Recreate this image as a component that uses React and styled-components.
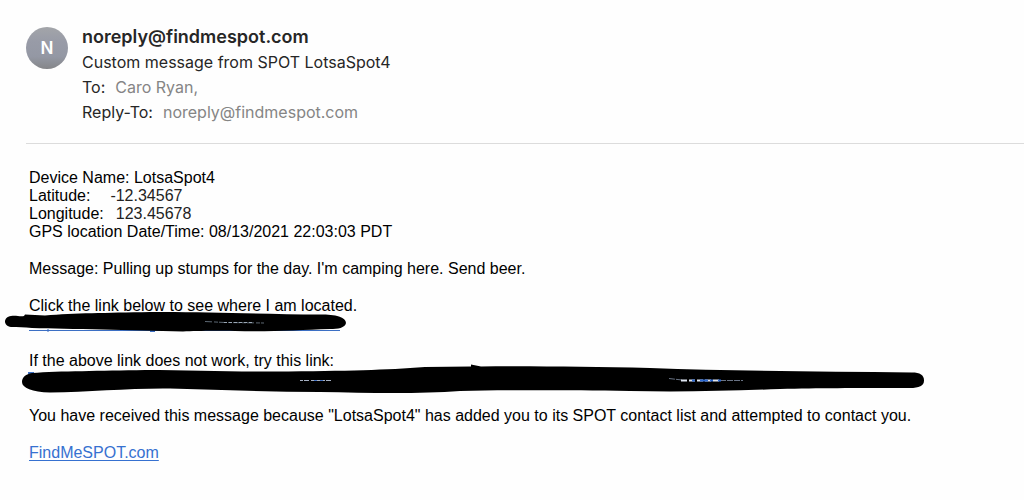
import styled, { createGlobalStyle } from "styled-components";

const GlobalStyle = createGlobalStyle`
  body {
    margin: 0;
    background: #fefefe;
    color: #000;
    font-family: "Liberation Sans", Helvetica, Arial, sans-serif;
  }
`;

const Header = styled.header`
  display: flex;
  gap: 14px;
  margin-left: 26px;
  padding: 24px 0 18px;
  border-bottom: 1px solid #dcdcdc;
  font-family: Inter, sans-serif;
`;

const Avatar = styled.div`
  display: flex;
  flex: none;
  align-items: center;
  justify-content: center;
  width: 42px;
  height: 42px;
  margin-top: 3px;
  border-radius: 50%;
  background: linear-gradient(#a3a5a9, #989ba7 35%, #9498a4 70%, #858689);
  color: #fff;
  font-size: 17px;
  font-weight: 600;
`;

const Sender = styled.h1`
  margin: 0;
  color: #262626;
  font-size: 18px;
  font-weight: 600;
  line-height: 26px;
`;

const HeaderLine = styled.p`
  display: flex;
  gap: 10px;
  margin: 0;
  color: #262626;
  font-size: 16px;
  line-height: 25px;
`;

const Muted = styled.span`
  color: #858585;
`;

const Body = styled.main`
  padding: 25px 29px;
  font-size: 16px;
  line-height: 18px;
`;

const Paragraph = styled.p`
  margin: 0 0 19px;
`;

const Coordinate = styled.span`
  margin-left: ${({ $gap }) => $gap}px;
  color: #222;
`;

const HiddenLink = styled.span`
  display: block;
  position: relative;
  height: 18px;
`;

const Marker = styled.svg`
  position: absolute;
  top: -7px;
  left: -29px;
  width: 960px;
  height: 32px;
  fill: none;
`;

const Ink = styled.path`
  fill: #000;
`;

const SiteLink = styled.a`
  color: #3671d0;
  text-underline-offset: 2px;
`;

function App() {
  return (
    <>
      <GlobalStyle />
      <Header>
        <Avatar>N</Avatar>
        <div>
          <Sender>noreply@findmespot.com</Sender>
          <HeaderLine>Custom message from SPOT LotsaSpot4</HeaderLine>
          <HeaderLine>
            To: <Muted>Caro Ryan,</Muted>
          </HeaderLine>
          <HeaderLine>
            Reply-To: <Muted>noreply@findmespot.com</Muted>
          </HeaderLine>
        </div>
      </Header>
      <Body>
        <Paragraph>
          Device Name: LotsaSpot4
          <br />
          Latitude:<Coordinate $gap={20}>-12.34567</Coordinate>
          <br />
          Longitude:<Coordinate $gap={12}>123.45678</Coordinate>
          <br />
          GPS location Date/Time: 08/13/2021 22:03:03 PDT
        </Paragraph>
        <Paragraph>
          Message: Pulling up stumps for the day. I'm camping here. Send beer.
        </Paragraph>
        <Paragraph>
          Click the link below to see where I am located.
          <HiddenLink>
            <Marker viewBox="0 308 960 32" aria-hidden="true">
              <path d="M29 330.5H340M48 329v3M150 331.5h5" stroke="#3c6fc4" />
              <Ink d="M11 316C16 315 20 317 24 316L25 314.500L45 315.500C75 313 105 313 150 312C200 311.500 260 314 320 314.500C336 314.500 346 317 346 323C345 328 338 329 330 329C300 330 270 332 235 331C210 330.500 195 331 183 331.500C130 330 70 329 32 328C24 327 18 327 11 327C3 326 3 317 11 316Z" />
              <path d="M205 321.500L225 322.500L264 323" stroke="#5d6873" strokeDasharray="7 2 4 1" />
              <path d="M224 322.500h28" stroke="#9aa7b5" strokeDasharray="3 2" />
            </Marker>
          </HiddenLink>
        </Paragraph>
        <Paragraph>
          If the above link does not work, try this link:
          <HiddenLink>
            <Marker viewBox="0 363 960 32" aria-hidden="true">
              <path d="M28 373h6" stroke="#3c6fc4" strokeWidth="2" />
              <Ink d="M32 373C60 371 100 371 145 370C190 370 230 372 275 371.500C350 371 385 370 425 367L471 366.500V364.500L481 366.500C540 366 590 367 650 368C730 371 820 371.500 912 372.500C920 372.500 924 375 924 380.500C924 386 919 388 910 388C850 388 820 388 780 389C730 391 680 392 630 391C560 390 510 390 460 391C420 394 370 393 320 392C270 392 220 390 170 388.500C130 388 90 392 50 392.500C32 392 22 388 22 382C22 377 26 374 32 373Z" />
              <path d="M300 380.500H332" stroke="#a7b1c3" strokeDasharray="3 1 5 2" />
              <path d="M314 380.500h12" stroke="#416fc2" strokeDasharray="3 3" />
              <path d="M669 378.500L682 380M720 380.500h23" stroke="#697384" strokeDasharray="6 1" />
              <path d="M681 380.500h40" stroke="#dfe6f1" strokeWidth="2" strokeDasharray="6 2" />
              <path d="M692 380.500h29" stroke="#2e6bd3" strokeWidth="2" strokeDasharray="3 5 8 2" />
            </Marker>
          </HiddenLink>
        </Paragraph>
        <Paragraph>
          You have received this message because "LotsaSpot4" has added you to
          its SPOT contact list and attempted to contact you.
        </Paragraph>
        <SiteLink href="https://findmespot.com">FindMeSPOT.com</SiteLink>
      </Body>
    </>
  );
}

export default App;
